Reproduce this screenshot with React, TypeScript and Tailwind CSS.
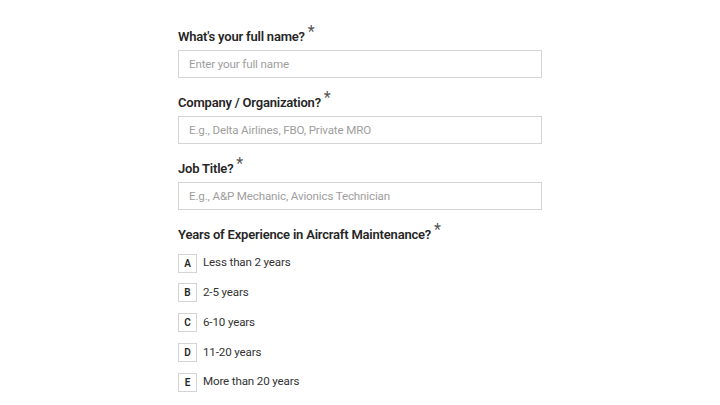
import React from 'react';

const fields = [
  { label: "What's your full name?", placeholder: 'Enter your full name' },
  { label: 'Company / Organization?', placeholder: 'E.g., Delta Airlines, FBO, Private MRO' },
  { label: 'Job Title?', placeholder: 'E.g., A&P Mechanic, Avionics Technician' },
];

const options = [
  { key: 'A', label: 'Less than 2 years' },
  { key: 'B', label: '2-5 years' },
  { key: 'C', label: '6-10 years' },
  { key: 'D', label: '11-20 years' },
  { key: 'E', label: 'More than 20 years' },
];

const Label = ({ text }: { text: string }) => (
  <div className="flex h-[20px] items-center text-[13px] font-semibold leading-[20px] tracking-[-0.2px] text-[#262626]">
    <span>{text}</span>
    <span className="relative -top-[5px] ml-[3px] text-[16px] font-normal text-[#555]">*</span>
  </div>
);

export default function App() {
  return (
    <div
      className="min-h-[405px] w-full bg-white pt-[27px]"
      style={{ fontFamily: 'Roboto, "Liberation Sans", sans-serif' }}
    >
      <div className="mx-auto w-[364px]">
        {fields.map((f) => (
          <div key={f.label} className="mb-[15px]">
            <Label text={f.label} />
            <input
              type="text"
              placeholder={f.placeholder}
              className="mt-[3px] h-[28px] w-full border border-[#d4d4d4] bg-white px-[10px] text-[11.6px] tracking-[-0.15px] text-[#262626] outline-none placeholder:text-[#9e9e9e]"
            />
          </div>
        ))}

        <Label text="Years of Experience in Aircraft Maintenance?" />
        <div className="mt-[8.5px] flex flex-col gap-[10.75px]">
          {options.map((o) => (
            <div key={o.key} className="flex items-center gap-[6px]">
              <div className="flex h-[19px] w-[19px] items-center justify-center border border-[#d4d4d4] text-[10px] font-semibold text-[#262626]">
                {o.key}
              </div>
              <span className="text-[11.6px] tracking-[-0.15px] text-[#333]">{o.label}</span>
            </div>
          ))}
        </div>
      </div>
    </div>
  );
}
